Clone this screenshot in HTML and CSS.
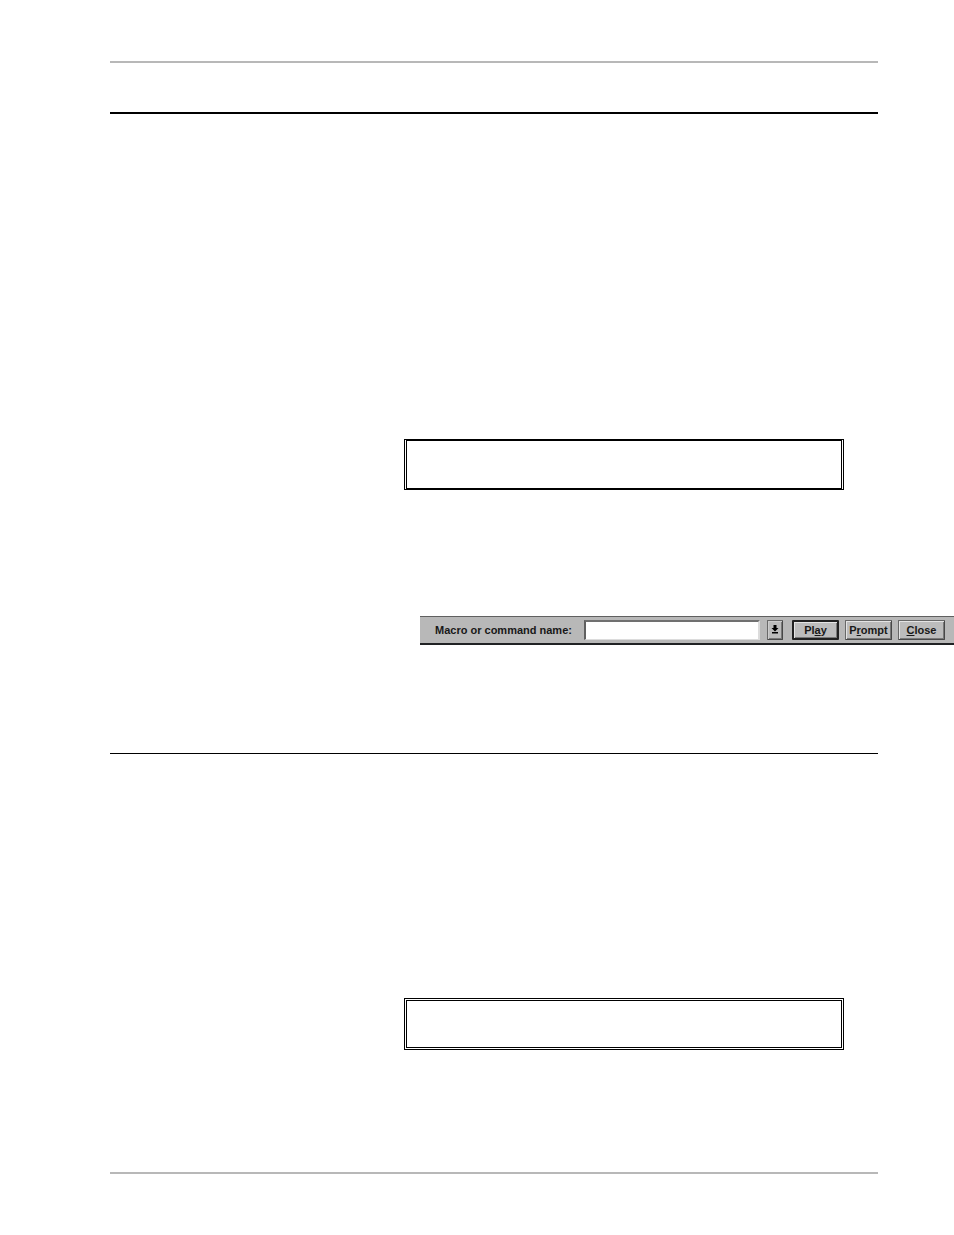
FILE: index.html
```html
<!DOCTYPE html>
<html lang="en">
  <head>
    <meta charset="UTF-8" />
    <meta name="viewport" content="width=device-width, initial-scale=1.0" />
    <title>Macro or command name</title>
    <link rel="stylesheet" href="styles.css">
  </head>
  <body>
    <header class="page-header"></header>

    <main>
      <section class="section section-main">
        <div class="syntax-box"></div>
        <form class="macro-bar">
          <label for="macro-name">Macro or command name:</label>
          <input id="macro-name" type="text" autocomplete="off">
          <button class="drop" type="button" aria-label="Show list">
            <svg width="8" height="10" viewBox="0 0 8 10">
              <path d="M2.5 0h3v3H7.5L4 6.5 0.5 3h2zM1 7h6v1.5H1z" />
            </svg>
          </button>
          <button class="command default" type="button">Pl<u>a</u>y</button>
          <button class="command" type="button">P<u>r</u>ompt</button>
          <button class="command" type="button"><u>C</u>lose</button>
        </form>
      </section>

      <section class="section section-sub">
        <div class="syntax-box open"></div>
      </section>
    </main>

    <footer class="page-footer"></footer>
  </body>
</html>
```

FILE: styles.css
```css
* {
  box-sizing: border-box;
}
body {
  margin: 0;
  padding: 61px 0 60px 110px;
  background: #fff;
  color: #000;
  font-family: "Liberation Sans", Arial, sans-serif;
}

.page-header,
.page-footer {
  margin-right: 76px;
  border-top: 2px solid #b8b8b8;
}
.page-header {
  height: 51px;
}

.section::before {
  content: "";
  display: block;
  margin-right: 76px;
  border-top: 1px solid #000;
}
.section-main {
  padding-bottom: 108px;
}
.section-main::before {
  border-top-width: 2px;
  margin-bottom: 325px;
}
.section-sub {
  padding-bottom: 122px;
}
.section-sub::before {
  margin-bottom: 244px;
}

.syntax-box {
  height: 51px;
  margin: 0 110px 0 294px;
  border: double #000;
  border-width: 2px 3px;
}
.syntax-box.open {
  height: 52px;
  border-width: 3px;
}

.macro-bar {
  display: flex;
  align-items: center;
  height: 29px;
  margin: 126px 0 0 310px;
  padding: 0 9px 0 15px;
  border-top: 1px solid #606060;
  border-bottom: 2px solid #202224;
  background: #b8b8b8;
  font-size: 11px;
  font-weight: bold;
  white-space: nowrap;
}
.macro-bar label {
  width: 149px;
  color: #181818;
}
.macro-bar input {
  flex: 1;
  min-width: 0;
  height: 20px;
  margin-right: 7px;
  padding: 0 4px;
  border: 1px solid #dcdcdc;
  border-top: 2px solid #707070;
  border-left: 2px solid #606060;
  border-right-width: 2px;
  background: #fff;
  font: inherit;
}
.macro-bar button {
  height: 20px;
  padding: 0;
  border: 1px solid #686868;
  border-right-color: #484848;
  border-bottom-color: #484848;
  border-radius: 1px;
  background: #bcbcbc;
  box-shadow: inset 1px 1px #e4e4e4, inset -1px -1px #787878;
  color: #181818;
  font: inherit;
}
.macro-bar .drop {
  display: flex;
  align-items: center;
  justify-content: center;
  width: 16px;
  margin-right: 9px;
  box-shadow: inset 1px 1px #cccccc, inset -1px -1px #787878;
}
.macro-bar .command {
  width: 47px;
}
.macro-bar .command + .command {
  margin-left: 6px;
}
.macro-bar .default {
  border: 2px solid #202020;
}
```
